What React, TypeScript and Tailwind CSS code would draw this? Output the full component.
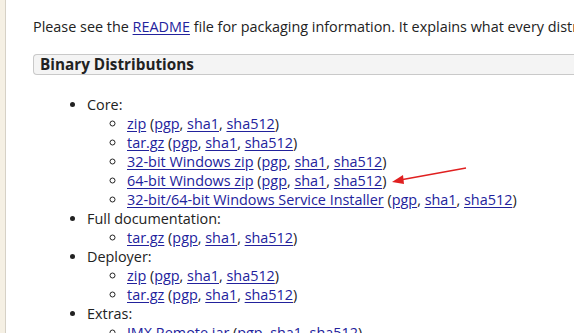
import React from 'react';

type Item = { label: string; links: string[] };

const sums = ['pgp', 'sha1', 'sha512'];

const groups: { title: string; items: Item[] }[] = [
  {
    title: 'Core:',
    items: [
      { label: 'zip', links: sums },
      { label: 'tar.gz', links: sums },
      { label: '32-bit Windows zip', links: sums },
      { label: '64-bit Windows zip', links: sums },
      { label: '32-bit/64-bit Windows Service Installer', links: sums },
    ],
  },
  { title: 'Full documentation:', items: [{ label: 'tar.gz', links: sums }] },
  {
    title: 'Deployer:',
    items: [
      { label: 'zip', links: sums },
      { label: 'tar.gz', links: sums },
    ],
  },
  { title: 'Extras:', items: [{ label: 'JMX Remote jar', links: sums }] },
];

function Link({ children }: { children: React.ReactNode }) {
  return <a className="text-[#22229c] underline underline-offset-[2px]">{children}</a>;
}

function Row({ item }: { item: Item }) {
  return (
    <li>
      <Link>{item.label}</Link> (
      {item.links.map((l, i) => (
        <React.Fragment key={l}>
          {i > 0 && ', '}
          <Link>{l}</Link>
        </React.Fragment>
      ))}
      )
    </li>
  );
}

export default function App() {
  return (
    <div className="relative flex w-[574px] h-[333px] overflow-hidden bg-white text-[14.4px] leading-[19px] text-[#222] font-['Open_Sans',sans-serif]">
      {/* left page edge */}
      <div className="w-[6px] shrink-0 bg-[#f5f0e4] border-r border-[#d6d1c6]" />

      <div className="flex-1 pl-[27px] pt-[17px] whitespace-nowrap">
        <p>
          Please see the <Link>README</Link> file for packaging information. It explains what every distribution contains.
        </p>

        <div className="mt-[18px] h-[21px] flex items-center pl-[6px] border border-r-0 border-[#c9c9c9] rounded-l-[4px] bg-[#f4f4f4]">
          <span className="font-bold text-[15.3px]">Binary Distributions</span>
        </div>

        <ul className="mt-[20px] pl-[54px] list-disc">
          {groups.map((g) => (
            <li key={g.title}>
              {g.title}
              <ul className="pl-[40px] list-[circle]">
                {g.items.map((it, i) => (
                  <Row key={i} item={it} />
                ))}
              </ul>
            </li>
          ))}
        </ul>
      </div>

      {/* red annotation arrow */}
      <svg className="absolute left-0 top-0 pointer-events-none" width="574" height="333">
        <line x1="466" y1="168" x2="400" y2="180" stroke="#e02020" strokeWidth="1.3" />
        <polygon points="392,182 403,175 404,184" fill="#e02020" />
      </svg>
    </div>
  );
}
